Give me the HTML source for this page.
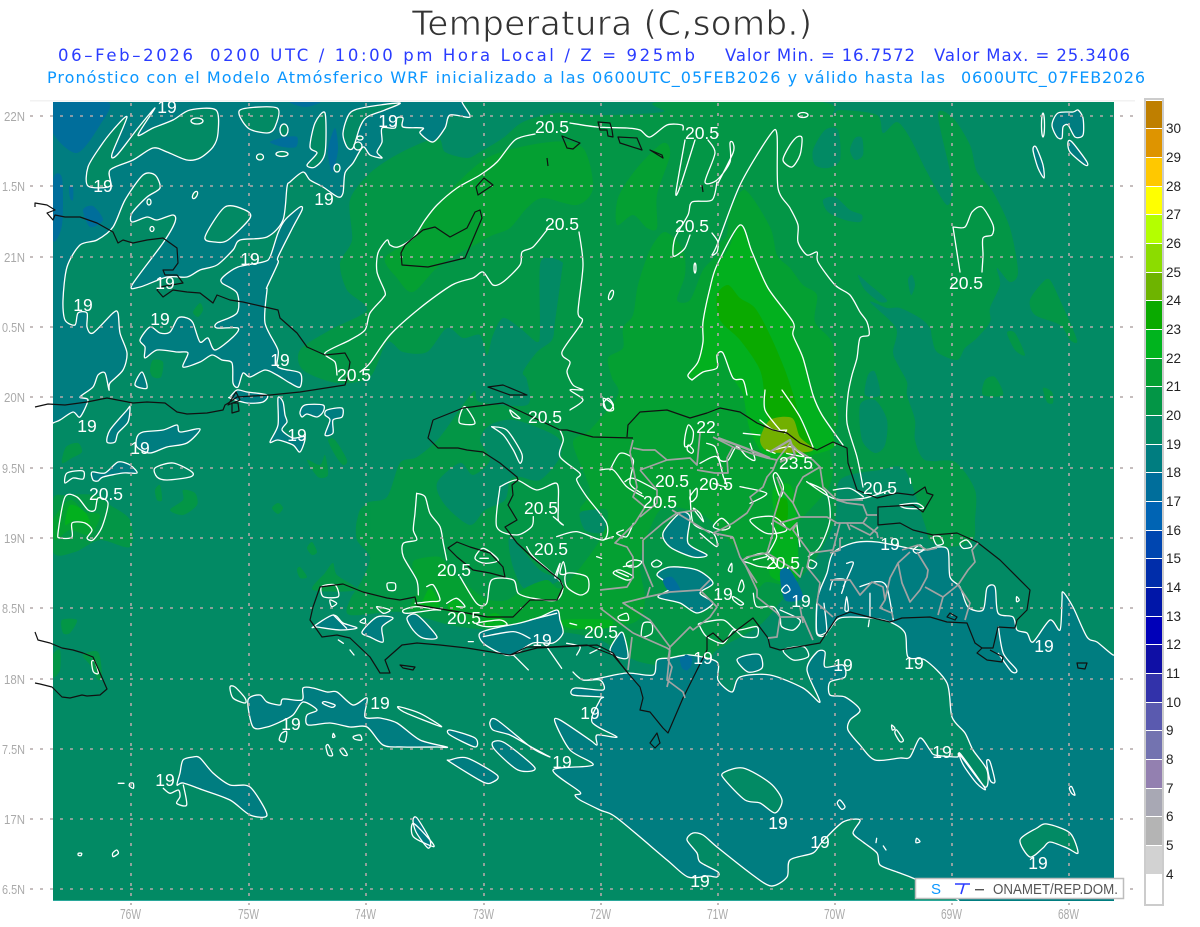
<!DOCTYPE html>
<html lang="es"><head><meta charset="utf-8"><title>Temperatura (C,somb.)</title>
<style>
html,body{margin:0;padding:0;background:#fff;width:1200px;height:927px;overflow:hidden}
svg{display:block}
text{font-family:"Liberation Sans",sans-serif}
.hd text{font-family:"DejaVu Sans","Liberation Sans",sans-serif}
.f0{fill:#028a64}.f1{fill:#039646}.f2{fill:#04a032}.f3{fill:#02b01e}.f4{fill:#0aaa00}.f5{fill:#72b000}.ft{fill:#007d80}.fb{fill:#006e9b}
.t,.g,.n,.z{stroke:#fff;stroke-width:1.3;stroke-linejoin:round;stroke-linecap:round}
.t{fill:#007d80}.g{fill:#028a64}.n,.z{fill:none}
.z{stroke-width:3.9}
.k{fill:none;stroke:#111;stroke-width:1.2;stroke-linejoin:round}
.p{fill:none;stroke:#a3a3a3;stroke-width:1.7;stroke-linejoin:round}
.d{stroke:#b3a9a9;stroke-width:1.6;stroke-dasharray:3 7;fill:none}
.l{fill:#fff;font-size:17.5px;text-anchor:middle}
.a{fill:#aaa;font-size:13px}
.c{fill:#222;font-size:13.5px}
</style></head><body>
<svg width="1200" height="927" viewBox="0 0 1200 927" xmlns="http://www.w3.org/2000/svg">
<defs><clipPath id="m"><rect x="53" y="102" width="1061" height="799"/></clipPath></defs>
<rect width="1200" height="927" fill="#fff"/>
<g class="hd">
<text x="412" y="35" font-size="34" fill="#333" stroke="#fff" stroke-width=".8" paint-order="normal" textLength="400">Temperatura (C,somb.)</text>
<g font-size="16.5" fill="#2a3cff">
<text x="58" y="61" textLength="135">06–Feb–2026</text>
<text x="210" y="61" textLength="485">0200 UTC / 10:00 pm Hora Local / Z = 925mb</text>
<text x="725" y="61" textLength="190">Valor Min. = 16.7572</text>
<text x="934" y="61" textLength="196">Valor Max. = 25.3406</text>
</g>
<g font-size="16" fill="#0a96ff">
<text x="47" y="83" textLength="898">Pronóstico con el Modelo Atmósferico WRF inicializado a las 0600UTC_05FEB2026 y válido hasta las</text>
<text x="961" y="83" textLength="184">0600UTC_07FEB2026</text>
</g>
</g>
<rect x="30" y="100" width="1105" height="1.5" fill="#f2f2f2"/>
<g clip-path="url(#m)">
<rect x="53" y="102" width="1061" height="799" class="f0"/>
<rect x="53" y="900" width="1061" height="1" fill="#2aa89a"/>
<!-- L1 -->
<polygon class="f1" points="660,102 820,102 833,115 840,110 877,115 883,133 897,122 910,138 927,172 947,205 952,182 938,115 953,118 970,145 977,172 993,192 1010,228 1018,272 1010,282 997,268 1000,285 990,308 990,322 977,338 965,348 957,360 937,352 932,338 930,328 920,318 900,308 887,308 870,302 896,328 893,352 898,365 907,382 907,395 915,420 915,440 925,460 955,462 975,490 975,520 973,540 950,547 930,540 925,525 905,470 880,470 840,480 835,520 815,560 790,590 760,625 717,650 700,668 640,662 600,640 560,632 490,630 450,625 400,612 350,615 350,600 362,580 370,557 357,540 357,520 367,503 387,497 400,463 417,457 440,437 473,392 480,402 527,405 527,380 523,372 537,352 552,340 555,322 562,270 562,262 550,258 540,265 540,330 537,342 520,328 503,318 493,335 487,355 480,335 463,338 447,328 427,352 403,352 387,342 370,377 337,383 303,370 300,350 330,330 367,310 347,290 340,263 352,240 350,200 370,173 400,153 437,138 445,152 467,158 480,152 503,138 523,122 557,113 603,115 663,112"/>
<g class="f1">
<polygon points="1030,300 1043,282 1050,280 1060,300 1077,340 1070,340 1060,325 1035,315"/>
<polygon points="1007,333 1015,333 1025,355 1015,350"/>
<polygon points="983,395 985,380 995,377 1003,395"/>
<polygon points="1043,388 1052,392 1053,403 1047,402"/>
<polygon points="62,463 66,447 78,443 82,452 72,458"/>
<polygon points="53,500 65,495 95,495 110,505 130,520 130,547 100,540 75,552 53,552"/>
<polygon points="150,370 153,360 163,362 161,377 153,377"/>
<polygon points="193,312 200,303 203,310 198,317"/>
<polygon points="170,510 183,500 183,490 195,493 197,505 183,515"/>
<polygon points="272,508 278,503 283,508 278,514"/>
<polygon points="307,460 320,465 325,455 328,475 318,477"/>
<polygon points="328,440 335,440 347,460 343,465 335,455"/>
<polygon points="307,548 312,542 317,552 312,555"/>
<polygon points="297,570 300,567 307,577 300,578"/>
<polygon points="313,590 325,573 333,563 337,575 357,590"/>
<polygon points="357,525 360,510 370,505 370,533 362,533"/>
<polygon points="53,655 60,650 60,670 53,677"/>
<polygon points="83,655 98,652 102,675 98,680 90,665"/>
<polygon points="62,620 77,620 70,633 63,633"/>
<polygon points="173,130 190,120 207,117 205,127 190,130 178,133"/>
<polygon points="155,490 160,485 162,500 157,500"/>
</g>
<!-- base bays -->
<g class="f0">
<polygon points="490,425 515,420 557,437 560,457 540,480 520,477 510,480 505,500 485,510 470,525 445,505 437,483 460,463 473,475 490,460 480,440"/>
<polygon points="510,537 540,570 560,580 527,590 513,567"/>
<polygon points="813,150 825,130 838,130 840,160 828,168 815,165"/>
<polygon points="850,150 855,138 862,138 863,155 855,160"/>
<polygon points="823,200 835,197 850,210 862,215 860,222 845,220 828,212"/>
<polygon points="858,275 870,285 887,300 880,302 865,290"/>
<polygon points="908,280 912,275 915,285 911,295"/>
<polygon points="865,395 868,375 875,372 880,395"/>
<polygon points="860,405 875,400 887,420 885,445 875,453 862,440"/>
<polygon points="910,390 945,390 953,430 950,455 930,460 920,430"/>
<polygon points="580,513 597,510 607,525 600,533 585,530"/>
<polygon points="573,103 590,103 590,110 575,110"/>
<polygon points="710,460 727,445 750,453 745,473 720,475"/>
</g>
<!-- L2 -->
<g class="f2">
<polygon points="487,158 550,142 583,148 593,188 577,205 543,198 527,208 510,228 493,235 480,242 440,265 413,292 397,278 385,258 413,238 437,205"/>
<polygon points="637,168 663,143 670,155 657,195 657,228 647,228 633,215 617,225 618,198"/>
<polygon points="745,190 770,227 777,255 790,268 803,285 817,295 815,322 833,345 835,395 838,420 830,450 833,470 827,490 800,520 790,530 797,583 767,582 757,587 745,560 710,520 690,510 660,510 640,560 645,600 633,623 567,630 477,625 443,610 410,610 420,587 413,570 415,560 440,557 453,573 477,593 490,600 507,600 527,587 547,580 563,587 600,540 607,510 580,510 590,490 573,443 590,430 618,395 612,378 608,358 623,348 623,328 633,315 638,285 650,250 665,232 683,250 685,275 677,300 690,300 703,270 717,255 720,243 727,235 730,212"/>
<polygon points="53,520 70,500 85,512 100,515 90,535 70,530 55,540"/>
</g>
<!-- L3 -->
<g class="f3">
<polygon points="740,225 752,252 768,288 793,322 793,335 803,358 813,395 822,415 835,445 813,455 800,460 767,457 750,430 743,395 733,378 723,353 717,355 717,368 703,372 692,380 688,375 698,362 703,342 703,322 710,288 717,265 728,250"/>
<polygon points="773,490 793,490 797,575 770,575 775,530"/>
<polygon points="423,600 430,588 438,600 438,607 420,607"/>
<polygon points="448,605 455,598 463,608 450,610"/>
<polygon points="482,620 495,613 507,622 500,626 484,626"/>
<polygon points="563,620 610,620 607,628 570,628"/>
<polygon points="70,505 85,512 90,525 75,520 65,525"/>
</g>
<polygon class="f4" points="717,295 728,285 740,298 755,308 770,335 785,370 795,400 800,420 812,450 790,452 770,425 765,400 760,370 740,340 720,320"/>
<polygon class="f4" points="777,500 787,500 787,520 777,520"/>
<polygon class="f5" points="760,440 770,420 792,418 800,437 813,448 807,452 770,452"/>
<!-- teal -->
<polygon class="t" points="40,90 462,90 462,102 470,117 450,115 445,128 433,142 420,133 423,128 403,127 403,118 397,118 395,128 382,128 382,142 377,152 382,158 370,155 363,147 353,163 345,173 343,193 338,197 323,187 310,180 303,172 290,182 287,187 283,220 267,237 240,240 233,250 217,265 200,270 187,277 167,277 140,287 132,285 163,243 175,222 173,215 157,220 147,217 132,222 132,213 147,197 160,188 155,175 143,175 125,200 113,227 97,240 80,245 67,267 63,300 65,320 75,325 78,313 87,313 87,327 93,333 113,313 118,313 120,333 127,353 123,370 110,383 109,390 105,373 98,375 93,387 80,397 88,400 80,417 73,412 60,420 53,423 40,430"/>
<polygon class="t" points="238,267 263,262 270,257 278,233 285,220 300,207 302,210 293,227 278,257 278,263 267,287 267,290 265,323 278,350 278,367 300,373 300,387 290,383 277,375 265,370 250,377 243,373 238,387 233,383 232,363 222,360 212,355 200,362 183,367 188,353 177,352 157,350 145,358 145,347 140,340 150,327 160,333 170,332 178,318 187,318 193,323 200,342 208,338 215,350 233,337 238,328 217,328 217,323 237,313 237,293 222,283 223,277"/>
<polygon class="t" points="573,672 583,680 600,678 627,673 653,675 657,660 670,658 690,655 717,662 718,680 732,692 740,677 770,675 803,688 820,702 807,670 817,652 825,652 825,667 843,665 845,677 830,682 830,695 845,697 860,710 850,720 848,730 860,745 875,760 900,758 910,757 920,738 930,750 935,755 957,757 960,755 985,787 987,770 973,750 965,733 952,717 947,683 925,660 908,657 905,633 890,622 870,618 840,618 827,632 817,633 817,603 820,590 827,573 833,553 853,543 877,542 920,550 937,547 948,550 950,577 960,587 968,607 983,610 987,588 995,587 998,613 1013,617 1017,630 1027,633 1033,642 1050,620 1060,630 1062,600 1063,592 1073,607 1087,637 1097,642 1113,655 1125,660 1125,915 960,915 958,900 915,879 897,872 880,865 877,853 863,842 853,833 860,820 843,822 822,842 813,853 790,860 787,877 771,886 750,873 717,847 703,835 693,833 687,840 697,853 700,862 718,872 717,877 708,876 688,877 667,860 617,818 600,810 580,800 575,795 580,792 553,770 593,765 570,750 555,722 560,720 590,740 597,745 597,735 617,737 592,722 600,700 602,697 573,695 575,688 603,690 600,680 583,680"/>
<g class="t">
<polygon points="135,385 142,372 147,388"/>
<polygon points="230,397 237,390 247,392 267,395 263,402 247,403 230,398"/>
<polygon points="137,437 143,432 163,430 177,425 180,432 200,429 187,443 167,447 150,453 137,447"/>
<polygon points="107,442 110,430 127,410 130,407 128,422 118,433 115,442"/>
<polygon points="93,480 92,472 105,473 118,462 130,465 137,473 123,473 103,477 98,481"/>
<polygon points="300,412 305,405 323,405 323,412 317,417 307,414 302,417"/>
<polygon points="327,410 342,408 342,417 333,420 333,433 325,435 330,420 325,415"/>
<polygon points="270,442 278,425 278,398 283,402 285,415 287,422 282,430 293,438 305,437 300,452 293,445 278,440"/>
<polygon points="663,533 680,513 690,517 688,543 707,555 693,557 670,547"/>
<polygon points="657,575 670,567 697,570 713,583 700,593 713,603 697,613 680,603 658,597 672,587"/>
<polygon points="480,633 500,627 520,623 540,617 557,610 560,620 563,633 553,643 533,643 513,655 500,653 483,643"/>
<polygon points="313,627 333,615 343,623 357,628 340,630 317,627"/>
<polygon points="407,618 417,615 437,637 423,638 413,630"/>
<polygon points="362,632 377,617 393,618 382,627 383,642 370,637"/>
<polygon points="617,637 623,633 628,657 617,657 610,650"/>
<polygon points="450,730 475,738 475,747 450,735"/>
<polygon points="490,722 497,720 532,748 550,757 533,748 510,735 493,730"/>
<polygon points="493,742 505,743 535,768 518,770 495,750"/>
<polygon points="450,760 467,758 497,775 493,782 483,782 450,762"/>
<polygon points="180,773 183,760 193,757 200,758 213,773 230,785 250,787 267,815 250,815 230,800 203,790 183,783 177,785"/>
<polygon points="397,723 420,740 447,747 437,747 403,747 383,745 367,727 350,727 330,723 308,725 307,715 317,710 303,702 293,715 280,722 267,727 253,727 248,700 260,695 267,702 280,705 283,699 302,700 303,688 313,688 327,692 337,692 353,705 367,698 365,717 380,718"/>
<polygon points="1052,125 1058,113 1073,112 1078,110 1083,118 1083,135 1075,137 1068,125 1063,127 1062,138 1057,137"/>
<polygon points="1068,142 1072,142 1087,162 1085,165 1070,152"/>
<polygon points="1033,150 1036,147 1043,165 1044,178 1038,168"/>
<polygon points="737,660 748,655 760,655 762,668 748,672"/>
<polygon points="413,820 417,818 430,840 428,848 416,832"/>
</g>
<!-- blue -->
<g class="fb">
<polygon points="53,102 108,102 100,125 77,153 53,133"/>
<polygon points="53,180 62,178 62,225 53,240"/>
<polygon points="83,210 93,206 103,220 90,227"/>
<polygon points="270,142 285,137 297,137 296,147 283,147"/>
<polygon points="328,150 335,128 338,150 332,172"/>
<polygon points="290,102 320,102 305,107"/>
<polygon points="69,187 73,187 73,200 70,198"/>
<polygon points="685,655 692,658 690,668 683,668"/>
<polygon points="780,572 790,570 803,597 785,600"/>
<polygon points="663,580 672,577 680,590 668,590"/>
<polygon points="680,657 690,660 688,670 682,668"/>
</g>
<!-- green blobs in NW teal -->
<g class="g">
<polygon points="88,186 88,167 100,147 113,130 127,117 112,154 117,155 138,128 155,108 138,135 153,128 173,120 190,110 216,110 218,133 213,147 200,158 187,160 167,152 153,148 133,160 110,170 110,186"/>
<polygon points="240,110 277,108 275,127 267,133 248,128"/>
<polygon points="325,113 315,123 310,147 317,153 307,165 315,167 325,153"/>
<polygon points="400,103 367,107 350,113 343,133 347,147 353,148 360,127 367,117 385,110"/>
<polygon points="723,773 743,768 770,783 782,800 775,813 760,803 745,800 725,780"/>
<polygon points="1037,828 1047,824 1070,833 1078,853 1067,848 1050,842 1043,848 1030,857 1020,840"/>
<polygon points="230,687 235,687 245,698 245,703 233,698"/>
<ellipse cx="284" cy="130" rx="4" ry="6"/>
<ellipse cx="260" cy="157" rx="3.5" ry="3"/>
<ellipse cx="282" cy="154" rx="6" ry="2.5"/>
<ellipse cx="197" cy="121" rx="6" ry="3"/>
<ellipse cx="228" cy="210" rx="3" ry="3.5"/>
<polygon points="205,237 225,207 245,210 250,218 228,240 215,242"/>
<ellipse cx="149" cy="202" rx="2" ry="3"/>
<ellipse cx="152" cy="229" rx="2" ry="2.5"/>
<ellipse cx="195" cy="195" rx="2" ry="4" transform="rotate(30 195 195)"/>
<ellipse cx="337" cy="168" rx="3" ry="4"/>
<ellipse cx="358" cy="146" rx="4" ry="4"/>
<ellipse cx="360" cy="138" rx="3" ry="2"/>
</g>
<!-- open contours -->
<g class="n">
<polygon points="58,533 65,497 77,497 88,510 95,510 98,498 108,503 102,527 93,540 87,538 92,530 85,523 72,523 72,537 60,538"/>
<polygon points="157,477 155,468 173,463 192,472 190,477 167,480"/>
<polygon points="65,483 67,473 83,471 83,479 73,478"/>
<polyline points="535,134 515,140 497,162 480,175 457,188 437,205 425,220 413,238 398,247 390,245 387,240 378,253 377,272 385,292 383,298 370,313 365,330 350,340 325,353 335,362 337,375"/>
<polyline points="547,230 533,247 522,252 520,265 503,282 493,285 483,272 473,278 452,285 420,308 390,335 370,363 360,372"/>
<polyline points="579,232 583,265 578,312 582,322 562,352 570,362 567,372 573,385 583,390 570,390 583,400 570,410"/>
<polyline points="570,123 597,127 627,128 640,130 650,137 667,125 682,125 683,130"/>
<polyline points="685,140 676,192 680,187 695,140"/>
<polyline points="708,140 715,153 705,182 717,180 730,162 730,143 733,143 733,153 717,185"/>
<polyline points="712,233 718,242 717,252 712,255 717,245 740,185 770,135 777,135 778,188 790,208 798,225 798,242 807,255 817,252 818,262 835,285 850,295 860,312 867,322 869,335 860,338 857,358 852,375 848,395 847,423 857,457 863,487"/>
<polyline points="690,235 685,248 677,255 673,255 675,238 688,215 692,202 712,200 717,182"/>
<polyline points="953,227 960,272"/>
<polyline points="982,272 983,255 983,238 992,235 993,225 982,207 972,212 965,227 953,227"/>
<polygon points="783,160 790,145 797,137 802,138 800,155 792,167"/>
<ellipse cx="803" cy="115" rx="5" ry="2.5"/>
<polyline points="765,390 765,410 780,430"/>
<polyline points="692,380 688,375 698,362 703,342 703,322 710,288 717,265 740,225 752,252 768,288 793,322 793,335 803,358 813,395 822,415 843,445"/>
<polyline points="692,380 703,372 717,368 717,355 723,353 733,378 743,380 747,395"/>
<polyline points="782,390 800,417 813,447"/>
<ellipse cx="611" cy="295" rx="2" ry="5" transform="rotate(20 611 295)"/>
<ellipse cx="695" cy="268" rx="1" ry="5"/>
<ellipse cx="1043" cy="125" rx="1.5" ry="12"/>
</g>
<g class="z" transform="translate(600 390) scale(.3333)">
<path d="M10,40 25,25 40,45 30,60 15,55Z M255,140 265,105 280,125 275,160 255,170Z M265,165 280,180 275,190 262,180Z M30,240 60,190 100,210 90,280 125,310 M0,240 40,240 80,290 130,320 M75,275 100,265 170,300 M320,160 345,170 360,210 385,210 410,170 440,200 465,210 450,160 M300,220 350,200 370,260 380,290 340,280 M270,320 290,295 290,320 275,335Z M300,370 280,355 310,395Z M340,410 365,385 390,410 370,420Z M450,390 520,380 560,420 500,430Z M270,300 280,400 340,430 350,470 300,430 M420,290 500,310 450,340 M100,400 80,440 50,430 70,420 M10,450 40,440 M80,520 100,510 125,515 110,530 85,530Z M155,520 170,510 185,520 175,530 160,530Z M40,550 60,540 100,560 80,570Z M385,540 395,520 395,545Z M415,600 425,570 432,590 425,605Z M400,620 430,640 420,645 400,630Z M460,610 470,650 520,650 540,680 545,710 580,720 600,690 540,660 M545,600 560,585 570,600 555,610Z M430,510 490,490 530,530 480,530 450,520Z M460,510 500,500 M630,510 650,520 640,535 625,530Z M630,280 680,310 690,390 660,470 625,500 M530,250 550,290 540,320 520,260Z M515,400 530,440 505,490 M590,400 600,470 M300,700 370,690 410,720 470,710 470,740 430,740 400,720 370,760 320,740 300,710Z M130,700 155,700 155,730 125,740Z M55,680 80,670 85,690 60,690Z M550,780 610,770 625,800 580,810Z M650,640 650,730 680,730 672,640 M740,620 745,660 735,660Z M810,610 810,680 M805,710 808,690 M690,600 700,570 735,570 725,610 M740,520 760,520 730,590 M780,590 830,575 860,590 880,690 M1000,440 1020,440 1030,460 1010,465Z M1080,460 1100,450 1115,470 1090,475Z M940,480 960,465 970,480 950,490Z M700,300 750,295 790,320 M620,275 700,325 790,325 870,300 M900,345 950,340 970,355 920,355Z M930,265 932,280 M480,90 520,120 560,120 M520,180 570,170 600,190 610,200 560,190 M555,130 560,120 M500,180 525,190 M430,130 480,135"/>
</g>
<g class="z" transform="translate(300 380) scale(.3333)">
<path d="M350,340 375,350 390,400 420,440 430,490 440,540 M350,340 345,400 340,450 350,480 310,490 310,530 350,600 355,645 M600,320 650,300 710,330 770,310 775,370 775,420 790,435 760,410 M600,320 590,440 650,465 695,440 700,410 M480,590 530,670 560,670 575,600 640,600 655,640 700,655 770,660 785,610 700,530 680,500 M770,470 830,455 910,480 920,430 860,350 830,300 840,280 780,230 790,180 780,150 M480,105 495,80 525,130 480,130Z M575,140 620,150 665,220 660,250 640,210 610,165 575,140 M630,90 660,115 640,110Z M525,535 550,505 595,540 555,550Z M540,535 565,535 M65,620 105,615 115,650 70,650Z M90,660 110,670 95,680Z M262,610 285,610 285,630 265,630Z M380,620 400,615 420,660 390,665 345,670 M440,670 470,655 495,680 470,680 M310,690 350,680 420,690 400,690 320,700Z M530,730 600,720 620,735 560,740Z M230,680 270,690 250,700Z M180,725 195,715 195,730Z M800,580 860,590 865,630 840,645 800,620Z M910,55 935,70 940,90 920,90Z M770,590 780,550 765,590Z M690,720 770,700 M780,580 790,545 797,580Z M970,560 1000,555 M890,530 905,535 M950,575 985,590 M810,730 830,735 M800,790 840,800 830,825 M870,820 900,805 M100,705 140,745 M550,770 640,755 690,775 M150,810 162,825 M115,780 130,790 M505,785 520,785 M740,800 785,865 M640,825 685,870"/>
</g>
<g class="z" transform="translate(50 620) scale(.3333)">
<path d="M125,125 135,125 145,160 130,155Z M205,490 222,490 M240,490 250,490 250,505 238,498Z M340,505 360,520 385,510 390,530 380,550 410,555 400,495 M695,340 710,335 705,365 688,360Z M1045,260 1110,280 1175,320 1120,300 1060,275Z M850,340 855,350 848,352Z M910,350 930,345 935,360 915,358Z M828,380 835,375 848,405 835,405Z M870,390 880,385 892,405 880,405Z M1090,610 1140,660 1150,680 1090,650Z M85,700 95,700 93,707 85,706Z M188,700 200,690 205,700 190,710Z M855,255 825,245 818,250 845,262Z"/>
</g>
<g class="z" transform="translate(830 520) scale(.3333)">
<path d="M505,320 520,400 560,450 545,455 505,400 M390,700 465,805 440,790 400,735Z M470,725 480,725 495,785 480,780Z M200,630 220,660 210,665 195,640Z M185,615 195,625 187,630Z M725,800 735,825 725,820 718,805Z M560,230 568,240 560,245Z M30,840 45,860 35,868 22,850Z M140,955 138,968 M160,978 168,990 M260,955 270,965 258,968Z"/>
</g>
</g>
<!-- grid -->
<g class="d">
<path d="M30,116H1135M30,186H1135M30,257H1135M30,327H1135M30,397H1135M30,468H1135M30,538H1135M30,608H1135M30,679H1135M30,749H1135M30,819H1135M30,889H1135"/>
<path d="M131,103V905M249,103V905M366,103V905M484,103V905M601,103V905M718,103V905M835,103V905M952,103V905M1069,103V905"/>
</g>
<g class="k">
<path d="M35,207 35,203 47,205 55,210 47,213 53,220 55,215 65,217 80,217 97,223 113,232 118,243 123,240 133,243 147,240 163,238 177,248 178,263 173,270 163,270 165,275 177,275 183,283 160,287 157,290 163,297 173,290 187,292 200,293 213,303 217,295 230,300 243,302 278,310 280,318 297,333 307,347 325,355 345,353 350,362 348,375 345,385 300,392 270,395 237,397 230,402 225,405 223,410 207,413 187,414 177,412 165,403 147,402 133,403 107,398 87,402 65,405 48,404 35,407"/>
<path d="M232,413 232,403 238,403 239,411Z M228,405 236,392 240,400Z"/>
<path d="M35,632 38,640 50,643 62,648 73,650 83,653 93,657 100,673 107,689 100,695 87,696 82,695 70,698 62,697 52,687 40,684 35,683"/>
<path d="M562,136 567,148 573,149 580,143Z M547,158 548,166 M598,122 610,123 612,130 613,137 608,136 607,130 600,130Z M618,137 637,138 642,150 620,143Z M650,150 663,158 662,155Z M484,178 493,185 478,195 476,187Z M405,245 401,253 402,265 428,267 465,258 482,218 480,210 475,212 467,228 450,237 435,227 423,230 413,238Z M702,185 703,192"/>
<path d="M488,387 503,385 527,395 510,395Z"/>
<path d="M433,420 428,438 438,448 458,448 467,450 483,452 500,463 517,477 518,480 512,485 513,495 508,505 517,520 505,527 517,543 533,558 560,580 563,587 557,600 530,600 520,610 513,617 487,617 467,613 447,610 417,605 415,597 400,600 387,598 363,592 343,584 320,587 313,607 310,620 322,637 337,635 350,638 370,657 380,673 390,673 385,660 402,645 417,643 440,645 467,648 510,655 527,647 550,647 587,645 613,655 628,673"/>
<path d="M433,420 463,408 503,403 560,430 567,430 593,437 633,438"/>
<path d="M448,548 457,542 470,547 490,553 503,567 505,577 490,573 473,570 457,557Z"/>
<path d="M400,665 415,667 413,670 403,668Z"/>
<path d="M627,437 628,425 640,412 667,410 690,418 707,413 720,408 740,412 757,423 773,430 787,433 800,443 817,450 833,442 847,448 848,463 857,490 877,498 897,493 913,495 925,487 927,493 933,495 923,512 913,505 878,507 878,525 900,523 913,530 933,535 957,533 977,542 1000,560 1030,590 1027,610 1017,620 1015,628 998,627 993,648 982,648 977,653 987,660 1002,662 1003,657 990,650"/>
<path d="M982,648 975,643 967,623 947,622 930,617 902,618 890,622 873,618 850,612 837,617 820,643 780,650 770,647 768,638 753,618 737,630 723,642 713,633 707,637 707,650 683,698 668,733 663,728 650,712 640,710 643,698 640,687 627,672 620,663 613,653 597,645 537,648 510,655"/>
<path d="M947,617 950,613 957,617 955,620Z M1077,663 1087,663 1085,669 1078,668Z"/>
<path d="M650,743 657,733 660,743 655,748Z"/>
</g>
<g clip-path="url(#m)">
<g class="p">
<path d="M633,440 630,452 633,467 637,487 633,497 645,507 635,523 615,543 627,547 633,557 633,577 627,587 600,590"/>
<path d="M633,448 643,450 655,450 667,460 690,458 697,465 700,433 M697,470 715,473 728,473 727,458 733,447 713,437 M733,447 750,453 767,458 777,460 773,470 767,477 763,487 750,497 753,503 747,513 733,523 720,530 713,533 M640,470 657,490 657,503 640,517 M667,460 640,470"/>
<path d="M777,460 790,443 797,450 813,460 820,467 803,477 797,487 793,503 800,517 780,523 M820,467 823,487 837,500 863,500 M837,500 847,503 863,505 867,515 877,515 M800,517 827,517 837,523 847,523 850,530 M867,517 863,523 877,533 878,538 M847,523 863,523"/>
<path d="M793,503 782,490 777,477 M782,490 773,520 790,530 797,523 793,530 810,553 807,567 820,583 817,603 833,617 M773,520 773,533 767,553 747,557 743,560 757,590 757,597 777,613 780,617 803,617 813,640 M767,553 790,567 800,577 803,567 M810,553 833,550 840,523 M780,617 777,637 768,638 M800,607 803,623"/>
<path d="M733,537 740,557 757,583 M713,533 733,537 M672,510 710,533 M643,540 643,563 650,580 653,587 M643,540 663,523 677,513 697,510 M650,587 647,597 670,592 700,590 710,580 M647,597 623,603 650,620 670,647 668,660 672,667 667,687 M700,590 717,607 710,617 693,630 690,627 670,647"/>
<path d="M632,637 628,670 M670,650 667,680 683,692 685,698 M633,633 667,648 670,650 M600,608 633,633"/>
<path d="M850,525 870,535 878,527 M840,538 840,550 830,553 M902,550 918,545 927,550 937,548 M910,552 898,563 890,578 885,600 880,608 892,613 893,618 M898,563 902,583 910,602 920,590 927,577 928,570 917,552 M925,587 943,597 938,615 M943,597 958,585 970,603 965,620 M958,585 968,570 975,562 972,550 978,543 M830,580 850,580 860,595 872,582 883,587 885,600"/>
<path d="M718,438 745,448 770,458" stroke-width="2.4"/>
<path d="M770,452 790,440 795,455 780,462" stroke-width="2.2"/>
</g>
<g class="l">
<text x="167" y="113">19</text><text x="103" y="192">19</text><text x="324" y="205">19</text><text x="250" y="265">19</text><text x="165" y="289">19</text><text x="83" y="311">19</text><text x="160" y="325">19</text><text x="388" y="127">19</text><text x="280" y="366">19</text><text x="87" y="432">19</text><text x="140" y="454">19</text><text x="297" y="441">19</text><text x="380" y="709">19</text><text x="291" y="730">19</text><text x="165" y="786">19</text><text x="590" y="719">19</text><text x="562" y="768">19</text><text x="700" y="887">19</text><text x="942" y="758">19</text><text x="778" y="829">19</text><text x="820" y="848">19</text><text x="703" y="664">19</text><text x="542" y="646">19</text><text x="801" y="607">19</text><text x="723" y="600">19</text><text x="843" y="671">19</text><text x="914" y="669">19</text><text x="890" y="550">19</text><text x="1044" y="652">19</text><text x="1038" y="869">19</text>
<text x="552" y="133">20.5</text><text x="702" y="139">20.5</text><text x="562" y="230">20.5</text><text x="692" y="232">20.5</text><text x="966" y="289">20.5</text><text x="354" y="381">20.5</text><text x="545" y="423">20.5</text><text x="106" y="500">20.5</text><text x="672" y="487">20.5</text><text x="716" y="490">20.5</text><text x="660" y="508">20.5</text><text x="541" y="514">20.5</text><text x="551" y="555">20.5</text><text x="454" y="576">20.5</text><text x="464" y="624">20.5</text><text x="601" y="638">20.5</text><text x="783" y="569">20.5</text><text x="880" y="494">20.5</text>
<text x="706" y="433">22</text><text x="796" y="469">23.5</text>
</g>
</g>
<!-- axis labels -->
<g class="a">
<text x="4" y="121" textLength="21" lengthAdjust="spacingAndGlyphs">22N</text><text x="2" y="191" textLength="23" lengthAdjust="spacingAndGlyphs">1.5N</text><text x="4" y="262" textLength="21" lengthAdjust="spacingAndGlyphs">21N</text><text x="2" y="332" textLength="23" lengthAdjust="spacingAndGlyphs">0.5N</text><text x="4" y="402" textLength="21" lengthAdjust="spacingAndGlyphs">20N</text><text x="2" y="473" textLength="23" lengthAdjust="spacingAndGlyphs">9.5N</text><text x="4" y="543" textLength="21" lengthAdjust="spacingAndGlyphs">19N</text><text x="2" y="613" textLength="23" lengthAdjust="spacingAndGlyphs">8.5N</text><text x="4" y="684" textLength="21" lengthAdjust="spacingAndGlyphs">18N</text><text x="2" y="754" textLength="23" lengthAdjust="spacingAndGlyphs">7.5N</text><text x="4" y="824" textLength="21" lengthAdjust="spacingAndGlyphs">17N</text><text x="2" y="894" textLength="23" lengthAdjust="spacingAndGlyphs">6.5N</text>
</g>
<g fill="#aaa" font-size="15">
<text x="120" y="919" textLength="21" lengthAdjust="spacingAndGlyphs">76W</text><text x="238" y="919" textLength="21" lengthAdjust="spacingAndGlyphs">75W</text><text x="355" y="919" textLength="21" lengthAdjust="spacingAndGlyphs">74W</text><text x="473" y="919" textLength="21" lengthAdjust="spacingAndGlyphs">73W</text><text x="590" y="919" textLength="21" lengthAdjust="spacingAndGlyphs">72W</text><text x="707" y="919" textLength="21" lengthAdjust="spacingAndGlyphs">71W</text><text x="824" y="919" textLength="21" lengthAdjust="spacingAndGlyphs">70W</text><text x="941" y="919" textLength="21" lengthAdjust="spacingAndGlyphs">69W</text><text x="1058" y="919" textLength="21" lengthAdjust="spacingAndGlyphs">68W</text>
</g>
<!-- stamp -->
<rect x="915.5" y="878.5" width="208" height="20" fill="#fff" stroke="#bdbdbd" stroke-width="1.5"/>
<text x="931" y="894" font-size="15" fill="#0a96ff" textLength="10">S</text>
<path d="M955,884H970M964,884L961,894" stroke="#2a3cff" stroke-width="1.6" fill="none"/>
<rect x="975" y="889" width="9" height="1.4" fill="#555"/>
<text x="993" y="894" font-size="15" fill="#555" textLength="125" lengthAdjust="spacingAndGlyphs">ONAMET/REP.DOM.</text>
<!-- colorbar -->
<rect x="1145" y="99" width="18" height="806" fill="#fff" stroke="#ccc" stroke-width="2"/>
<g>
<rect x="1146" y="101" width="16" height="27" fill="#bf7f00"/><rect x="1146" y="129" width="16" height="28" fill="#de9400"/><rect x="1146" y="158" width="16" height="28" fill="#ffc800"/><rect x="1146" y="187" width="16" height="27" fill="#ffff00"/><rect x="1146" y="215" width="16" height="28" fill="#b4ff00"/><rect x="1146" y="244" width="16" height="28" fill="#8cdc00"/><rect x="1146" y="273" width="16" height="27" fill="#6eb400"/><rect x="1146" y="301" width="16" height="28" fill="#0aaa00"/><rect x="1146" y="330" width="16" height="28" fill="#00b41e"/><rect x="1146" y="359" width="16" height="27" fill="#04a032"/><rect x="1146" y="387" width="16" height="28" fill="#039646"/><rect x="1146" y="416" width="16" height="28" fill="#028a64"/><rect x="1146" y="445" width="16" height="27" fill="#007d80"/><rect x="1146" y="473" width="16" height="28" fill="#006e9b"/><rect x="1146" y="502" width="16" height="28" fill="#0064b4"/><rect x="1146" y="531" width="16" height="27" fill="#0046b0"/><rect x="1146" y="559" width="16" height="28" fill="#002daa"/><rect x="1146" y="588" width="16" height="28" fill="#0016a8"/><rect x="1146" y="617" width="16" height="27" fill="#0000b9"/><rect x="1146" y="645" width="16" height="28" fill="#0f0fa5"/><rect x="1146" y="674" width="16" height="28" fill="#3232aa"/><rect x="1146" y="703" width="16" height="27" fill="#5a5aaf"/><rect x="1146" y="731" width="16" height="28" fill="#7373b0"/><rect x="1146" y="760" width="16" height="28" fill="#9380b0"/><rect x="1146" y="789" width="16" height="27" fill="#a8a8b4"/><rect x="1146" y="817" width="16" height="28" fill="#b4b4b4"/><rect x="1146" y="846" width="16" height="28" fill="#d2d2d2"/><rect x="1146" y="875" width="16" height="28" fill="#fff"/>
</g>
<g class="c">
<text x="1166" y="133">30</text><text x="1166" y="162">29</text><text x="1166" y="191">28</text><text x="1166" y="219">27</text><text x="1166" y="248">26</text><text x="1166" y="277">25</text><text x="1166" y="305">24</text><text x="1166" y="334">23</text><text x="1166" y="363">22</text><text x="1166" y="391">21</text><text x="1166" y="420">20</text><text x="1166" y="449">19</text><text x="1166" y="477">18</text><text x="1166" y="506">17</text><text x="1166" y="535">16</text><text x="1166" y="563">15</text><text x="1166" y="592">14</text><text x="1166" y="621">13</text><text x="1166" y="649">12</text><text x="1166" y="678">11</text><text x="1166" y="707">10</text><text x="1166" y="735">9</text><text x="1166" y="764">8</text><text x="1166" y="793">7</text><text x="1166" y="821">6</text><text x="1166" y="850">5</text><text x="1166" y="879">4</text>
</g>
</svg>
<script>
(function(){
var NS="http://www.w3.org/2000/svg",T=.85;
function fmt(a){return a[0].toFixed(1)+" "+a[1].toFixed(1)}
function cr(p,closed){
var n=p.length;if(n<3)return "M"+p.map(fmt).join("L")+(closed?"Z":"");
var d="M"+fmt(p[0]),m=closed?n:n-1;
for(var i=0;i<m;i++){
var a=p[closed?(i-1+n)%n:Math.max(i-1,0)],b=p[i],c=p[(i+1)%n],e=p[closed?(i+2)%n:Math.min(i+2,n-1)];
d+="C"+fmt([b[0]+(c[0]-a[0])/6*T,b[1]+(c[1]-a[1])/6*T])+" "+fmt([c[0]-(e[0]-b[0])/6*T,c[1]-(e[1]-b[1])/6*T])+" "+fmt(c);
}
return d+(closed?"Z":"");
}
function pts(s){var m=s.match(/-?[\d.]+/g)||[],o=[];for(var i=0;i+1<m.length;i+=2)o.push([+m[i],+m[i+1]]);return o}
var list=document.querySelectorAll("polygon,polyline");
for(var i=0;i<list.length;i++){
var el=list[i],path=document.createElementNS(NS,"path");
path.setAttribute("d",cr(pts(el.getAttribute("points")),el.tagName.toLowerCase()=="polygon"));
if(el.getAttribute("class"))path.setAttribute("class",el.getAttribute("class"));
el.parentNode.replaceChild(path,el);
}
var z=document.querySelectorAll(".z path");
for(var j=0;j<z.length;j++){
var parts=z[j].getAttribute("d").split(/(?=M)/),out="";
for(var k=0;k<parts.length;k++){var s=parts[k];if(!s.trim())continue;out+=cr(pts(s),/Z/.test(s))}
z[j].setAttribute("d",out);
}
})();
</script>
</body></html>
